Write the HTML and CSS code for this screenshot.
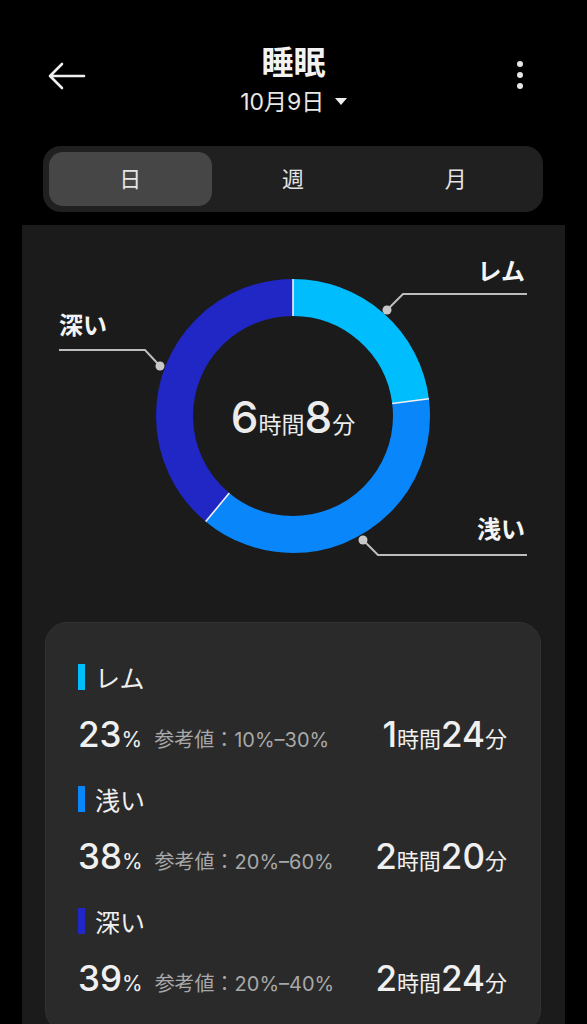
FILE: index.html
```html
<!DOCTYPE html>
<html lang="ja">
<head>
  <meta charset="UTF-8">
  <title>睡眠</title>
  <meta name="viewport" content="width=device-width, initial-scale=1.0">
  <link rel="stylesheet" href="styles.css">
</head>
<body>

  <header class="top-bar">
    <button class="icon-btn back" aria-label="戻る">
      <svg width="40" height="30" viewBox="0 0 40 30">
        <path d="M38 15 H4 M16 3 L4 15 L16 27" fill="none" stroke="#eee" stroke-width="2.6" stroke-linecap="round" stroke-linejoin="round"/>
      </svg>
    </button>
    <div class="title-block">
      <h1>睡眠</h1>
      <div class="date">10月9日 <span class="caret"></span></div>
    </div>
    <button class="icon-btn more" aria-label="メニュー">
      <span class="dot"></span><span class="dot"></span><span class="dot"></span>
    </button>
  </header>

  <nav class="tabs">
    <div class="tab active">日</div>
    <div class="tab">週</div>
    <div class="tab">月</div>
  </nav>

  <main class="panel">
    <svg class="donut" width="543" height="375" viewBox="0 0 543 375">
      <g transform="rotate(-90 271 191)" fill="none" stroke-width="37">
        <circle cx="271" cy="191" r="118.5" stroke="#00bdfe" stroke-dasharray="171.25 744.56" stroke-dashoffset="0"/>
        <circle cx="271" cy="191" r="118.5" stroke="#0a86fb" stroke-dasharray="282.93 744.56" stroke-dashoffset="-171.25"/>
        <circle cx="271" cy="191" r="118.5" stroke="#2027c4" stroke-dasharray="290.38 744.56" stroke-dashoffset="-454.18"/>
      </g>
      <g stroke="#f2f2f2" stroke-width="1.6">
        <line x1="271" y1="54" x2="271" y2="91"/>
        <line x1="370.2" y1="178.5" x2="406.9" y2="173.8"/>
        <line x1="207.3" y1="268.1" x2="183.7" y2="296.6"/>
      </g>

      <g fill="none" stroke="#bdbdbd" stroke-width="2">
        <polyline points="365,85 381,69 505,69"/>
        <polyline points="138,141 123,125 37,125"/>
        <polyline points="341,315 356,330 505,330"/>
      </g>
      <g fill="#c8c8c8">
        <circle cx="365" cy="85" r="4.5"/>
        <circle cx="138" cy="141" r="4.5"/>
        <circle cx="341" cy="315" r="4.5"/>
      </g>

      <g class="chart-label">
        <text x="503" y="55" text-anchor="end">レム</text>
        <text x="37" y="109">深い</text>
        <text x="503" y="313" text-anchor="end">浅い</text>
      </g>

      <text class="center-total" x="271" y="208" text-anchor="middle"><tspan class="big">6</tspan><tspan class="unit">時間</tspan><tspan class="big">8</tspan><tspan class="unit">分</tspan></text>
    </svg>

    <section class="stats">
      <div class="stage">
        <div class="stage-name"><span class="swatch rem"></span>レム</div>
        <div class="stage-row">
          <div class="pct"><span class="num">23</span><span class="pc">%</span><span class="ref">参考値：10%–30%</span></div>
          <div class="dur"><span class="num">1</span><span class="u">時間</span><span class="num">24</span><span class="u">分</span></div>
        </div>
      </div>
      <div class="stage">
        <div class="stage-name"><span class="swatch light"></span>浅い</div>
        <div class="stage-row">
          <div class="pct"><span class="num">38</span><span class="pc">%</span><span class="ref">参考値：20%–60%</span></div>
          <div class="dur"><span class="num">2</span><span class="u">時間</span><span class="num">20</span><span class="u">分</span></div>
        </div>
      </div>
      <div class="stage">
        <div class="stage-name"><span class="swatch deep"></span>深い</div>
        <div class="stage-row">
          <div class="pct"><span class="num">39</span><span class="pc">%</span><span class="ref">参考値：20%–40%</span></div>
          <div class="dur"><span class="num">2</span><span class="u">時間</span><span class="num">24</span><span class="u">分</span></div>
        </div>
      </div>
    </section>
  </main>

</body>
</html>
```

FILE: styles.css
```css
body {
  margin: 0;
  background: #000;
  color: #f0f0f0;
  font-family: Inter, "Noto Sans CJK JP", sans-serif;
  overflow: hidden;
}
.top-bar {
  display: grid;
  grid-template-columns: 110px 1fr 110px;
  align-items: center;
  height: 146px;
  box-sizing: border-box;
  padding-top: 12px;
}
.icon-btn {
  background: none;
  border: none;
  padding: 0;
  cursor: pointer;
}
.back {
  justify-self: start;
  margin-left: 46px;
  margin-top: -6px;
}
.back svg {
  display: block;
}
.more {
  justify-self: end;
  margin-right: 64px;
  display: flex;
  flex-direction: column;
  gap: 5px;
  margin-top: -8px;
}
.dot {
  width: 6px;
  height: 6px;
  border-radius: 50%;
  background: #e6e6e6;
}
.title-block {
  text-align: center;
}
h1 {
  margin: 0;
  font-size: 32px;
  font-weight: 700;
  line-height: 36px;
  color: #f2f2f2;
  font-family: "Noto Sans CJK JP", sans-serif;
}
.date {
  margin-top: 10px;
  font-size: 23px;
  line-height: 28px;
  color: #e8e8e8;
}
.caret {
  display: inline-block;
  width: 0;
  height: 0;
  border-left: 6px solid transparent;
  border-right: 6px solid transparent;
  border-top: 7px solid #eee;
  vertical-align: middle;
  margin-left: 4px;
  margin-top: -4px;
}
.tabs {
  display: grid;
  grid-template-columns: repeat(3, 1fr);
  margin: 0 44px 0 43px;
  padding: 6px;
  background: #202020;
  border-radius: 18px;
}
.tab {
  height: 54px;
  line-height: 54px;
  text-align: center;
  font-size: 22px;
  color: #e4e4e4;
  border-radius: 14px;
}
.tab.active {
  background: #464646;
}
.panel {
  margin: 13px 22px 0;
  background: #1b1b1b;
  padding-bottom: 40px;
}
.donut {
  display: block;
}
.chart-label {
  font-size: 24px;
  font-weight: 700;
  fill: #f4f4f4;
  font-family: "Noto Sans CJK JP", sans-serif;
}
.center-total {
  fill: #ececec;
}
.center-total .big {
  font-size: 44px;
  font-weight: 500;
}
.center-total .unit {
  font-size: 23px;
}
.stats {
  margin: 22px 24px 0 23px;
  background: #2a2a2a;
  border: 1px solid #323232;
  border-radius: 22px;
  padding: 36px 33px 30px 32px;
  display: flex;
  flex-direction: column;
  gap: 24px;
}
.stage-name {
  display: flex;
  align-items: center;
  height: 36px;
  font-size: 25px;
  color: #efefef;
}
.swatch {
  width: 7px;
  height: 26px;
  margin-right: 10px;
}
.swatch.rem { background: #00bdfe; }
.swatch.light { background: #0a86fb; }
.swatch.deep { background: #2027c4; }
.stage-row {
  display: flex;
  justify-content: space-between;
  align-items: baseline;
  margin-top: 18px;
  height: 44px;
}
.num {
  font-size: 35px;
  font-weight: 500;
  color: #f0f0f0;
}
.pc {
  font-size: 21px;
  color: #f0f0f0;
}
.ref {
  margin-left: 12px;
  font-size: 20px;
  color: #a8a8a8;
}
.dur .u {
  font-size: 22px;
  color: #f0f0f0;
}
```
